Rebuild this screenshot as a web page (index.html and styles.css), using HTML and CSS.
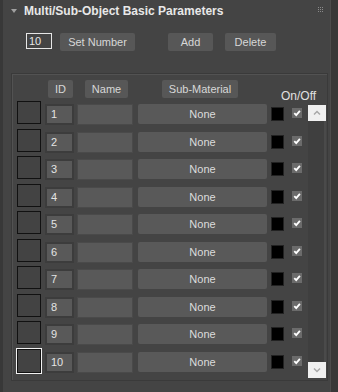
FILE: index.html
```html
<!DOCTYPE html>
<html>
<head>
<meta charset="utf-8">
<link rel="stylesheet" href="styles.css">
</head>
<body>
<div class="panel">
  <div class="rollout-head">
    <span class="tri"></span>
    <span class="title">Multi/Sub-Object Basic Parameters</span>
    <svg class="grip" width="6" height="6" viewBox="0 0 6 6"><g fill="#8a8a8a"><rect x="0" y="0" width="1" height="1"/><rect x="2" y="0" width="1" height="1"/><rect x="4" y="0" width="1" height="1"/><rect x="0" y="2" width="1" height="1"/><rect x="2" y="2" width="1" height="1"/><rect x="4" y="2" width="1" height="1"/><rect x="0" y="4" width="1" height="1"/><rect x="2" y="4" width="1" height="1"/><rect x="4" y="4" width="1" height="1"/></g></svg>
  </div>
  <div class="controls">
    <div class="num">10</div>
    <div class="btn set">Set Number</div>
    <div class="btn add">Add</div>
    <div class="btn del">Delete</div>
  </div>
  <div class="group">
    <div class="head-row">
      <div class="btn h-id">ID</div>
      <div class="btn h-name">Name</div>
      <div class="btn h-sub">Sub-Material</div>
      <div class="onoff">On/Off</div>
    </div>
    <div class="body">
      <div class="rows">
        <div class="row"><div class="swatch"></div><div class="field id">1</div><div class="field name"></div><div class="none">None</div><div class="color"></div><div class="check"><svg viewBox="0 0 10 10"><path d="M2.3 5.2 L4.2 7.2 L7.9 2.8" fill="none" stroke="#fff" stroke-width="1.8"/></svg></div></div>
        <div class="row"><div class="swatch"></div><div class="field id">2</div><div class="field name"></div><div class="none">None</div><div class="color"></div><div class="check"><svg viewBox="0 0 10 10"><path d="M2.3 5.2 L4.2 7.2 L7.9 2.8" fill="none" stroke="#fff" stroke-width="1.8"/></svg></div></div>
        <div class="row"><div class="swatch"></div><div class="field id">3</div><div class="field name"></div><div class="none">None</div><div class="color"></div><div class="check"><svg viewBox="0 0 10 10"><path d="M2.3 5.2 L4.2 7.2 L7.9 2.8" fill="none" stroke="#fff" stroke-width="1.8"/></svg></div></div>
        <div class="row"><div class="swatch"></div><div class="field id">4</div><div class="field name"></div><div class="none">None</div><div class="color"></div><div class="check"><svg viewBox="0 0 10 10"><path d="M2.3 5.2 L4.2 7.2 L7.9 2.8" fill="none" stroke="#fff" stroke-width="1.8"/></svg></div></div>
        <div class="row"><div class="swatch"></div><div class="field id">5</div><div class="field name"></div><div class="none">None</div><div class="color"></div><div class="check"><svg viewBox="0 0 10 10"><path d="M2.3 5.2 L4.2 7.2 L7.9 2.8" fill="none" stroke="#fff" stroke-width="1.8"/></svg></div></div>
        <div class="row"><div class="swatch"></div><div class="field id">6</div><div class="field name"></div><div class="none">None</div><div class="color"></div><div class="check"><svg viewBox="0 0 10 10"><path d="M2.3 5.2 L4.2 7.2 L7.9 2.8" fill="none" stroke="#fff" stroke-width="1.8"/></svg></div></div>
        <div class="row"><div class="swatch"></div><div class="field id">7</div><div class="field name"></div><div class="none">None</div><div class="color"></div><div class="check"><svg viewBox="0 0 10 10"><path d="M2.3 5.2 L4.2 7.2 L7.9 2.8" fill="none" stroke="#fff" stroke-width="1.8"/></svg></div></div>
        <div class="row"><div class="swatch"></div><div class="field id">8</div><div class="field name"></div><div class="none">None</div><div class="color"></div><div class="check"><svg viewBox="0 0 10 10"><path d="M2.3 5.2 L4.2 7.2 L7.9 2.8" fill="none" stroke="#fff" stroke-width="1.8"/></svg></div></div>
        <div class="row"><div class="swatch"></div><div class="field id">9</div><div class="field name"></div><div class="none">None</div><div class="color"></div><div class="check"><svg viewBox="0 0 10 10"><path d="M2.3 5.2 L4.2 7.2 L7.9 2.8" fill="none" stroke="#fff" stroke-width="1.8"/></svg></div></div>
        <div class="row"><div class="swatch selected"></div><div class="field id">10</div><div class="field name"></div><div class="none">None</div><div class="color"></div><div class="check"><svg viewBox="0 0 10 10"><path d="M2.3 5.2 L4.2 7.2 L7.9 2.8" fill="none" stroke="#fff" stroke-width="1.8"/></svg></div></div>
      </div>
      <div class="scroll">
        <div class="arrow"><svg viewBox="0 0 18 16"><path d="M6 9.5 L9 6.5 L12 9.5" fill="none" stroke="#a8a8a8" stroke-width="1.5"/></svg></div>
        <div class="track"></div>
        <div class="arrow"><svg viewBox="0 0 18 16"><path d="M6 6.5 L9 9.5 L12 6.5" fill="none" stroke="#a8a8a8" stroke-width="1.5"/></svg></div>
      </div>
    </div>
  </div>
</div>
</body>
</html>
```

FILE: styles.css
```css
html, body {
  margin: 0;
  padding: 0;
}
body {
  background: #383838;
  width: 338px;
  height: 392px;
  overflow: hidden;
  font-family: "Liberation Sans", Arial, sans-serif;
  font-size: 11px;
  color: #dcdcdc;
}
.panel {
  margin-left: 3px;
  width: 328px;
  height: 392px;
  background: #444444;
  border-right: 1px solid #4c4c4c;
  box-sizing: border-box;
  display: flex;
  flex-direction: column;
}
.rollout-head {
  height: 22px;
  display: flex;
  align-items: center;
}
.tri {
  width: 0;
  height: 0;
  margin-left: 8px;
  margin-top: -1px;
  border-left: 3px solid transparent;
  border-right: 3px solid transparent;
  border-top: 4px solid #a0a0a0;
}
.title {
  margin-left: 7px;
  font-weight: bold;
  font-size: 12px;
  color: #e8e8e8;
  margin-top: -1px;
}
.grip {
  margin-left: auto;
  margin-right: 6px;
  margin-top: -3px;
}
.controls {
  display: flex;
  align-items: flex-start;
  margin-top: 11px;
  padding-left: 23px;
}
.num {
  width: 26px;
  height: 16px;
  box-sizing: border-box;
  border: 1px solid #e6e6e6;
  background: #444;
  color: #e6e6e6;
  line-height: 14px;
  padding-left: 2px;
}
.btn {
  background: #575757;
  border-radius: 2px;
  height: 18px;
  line-height: 18px;
  text-align: center;
  color: #d8d8d8;
  box-sizing: border-box;
}
.set { width: 75px; margin-left: 8px; }
.add { width: 45px; margin-left: 33px; }
.del { width: 51px; margin-left: 12px; }
.group {
  margin-top: 22px;
  margin-left: 8px;
  width: 317px;
  height: 308px;
  box-sizing: border-box;
  border: 1px solid #3a3a3a;
  box-shadow: inset 1px 1px 0 #525252;
  padding: 6px 0 0 5px;
}
.head-row {
  display: flex;
  align-items: flex-start;
  height: 18px;
  padding-left: 31px;
}
.h-id { width: 25px; }
.h-name { width: 43px; margin-left: 12px; }
.h-sub { width: 76px; margin-left: 34px; }
.onoff {
  margin-left: 43px;
  margin-top: 9px;
  font-size: 12px;
  color: #e0e0e0;
}
.body {
  display: flex;
  margin-top: 3px;
}
.rows {
  display: flex;
  flex-direction: column;
  width: 285px;
}
.row {
  height: 27.5px;
  display: flex;
  align-items: flex-start;
}
.swatch {
  width: 24px;
  height: 23px;
  box-sizing: border-box;
  border: 1px solid #111;
  background: #434343;
}
.swatch.selected {
  width: 26px;
  height: 26px;
  margin-left: -1px;
  margin-right: -1px;
  margin-top: -1px;
  border: 1px solid #f2f2f2;
  box-shadow: inset 0 0 0 1px #111;
}
.field {
  margin-top: 3px;
  height: 21px;
  box-sizing: border-box;
  border: 2px solid #3c3c3c;
  background: #595959;
  line-height: 17px;
  color: #e4e4e4;
}
.id { width: 29px; margin-left: 4px; padding-left: 4px; }
.name { width: 56px; margin-left: 3px; border-width: 1px; border-color: #4a4a4a; }
.none {
  margin-left: 5px;
  margin-top: 3px;
  width: 129px;
  height: 20px;
  line-height: 20px;
  background: #595959;
  border-radius: 2px;
  text-align: center;
  color: #dcdcdc;
}
.color {
  margin-left: 4px;
  margin-top: 6px;
  width: 13px;
  height: 14px;
  box-sizing: border-box;
  background: #000;
  border: 1px solid #222;
}
.check {
  margin-left: 8px;
  margin-top: 7px;
  width: 10px;
  height: 10px;
  background: #6b6b6b;
}
.check svg {
  display: block;
  width: 10px;
  height: 10px;
}
.scroll {
  margin-left: 6px;
  margin-top: 4px;
  width: 18px;
  height: 273px;
  display: flex;
  flex-direction: column;
  background: #3f3f3f;
  box-shadow: inset -2px 0 0 #4a4a4a;
}
.arrow {
  height: 16px;
  background: #f0f0f0;
}
.arrow svg {
  display: block;
  width: 18px;
  height: 16px;
}
.track {
  flex: 1;
}
```
